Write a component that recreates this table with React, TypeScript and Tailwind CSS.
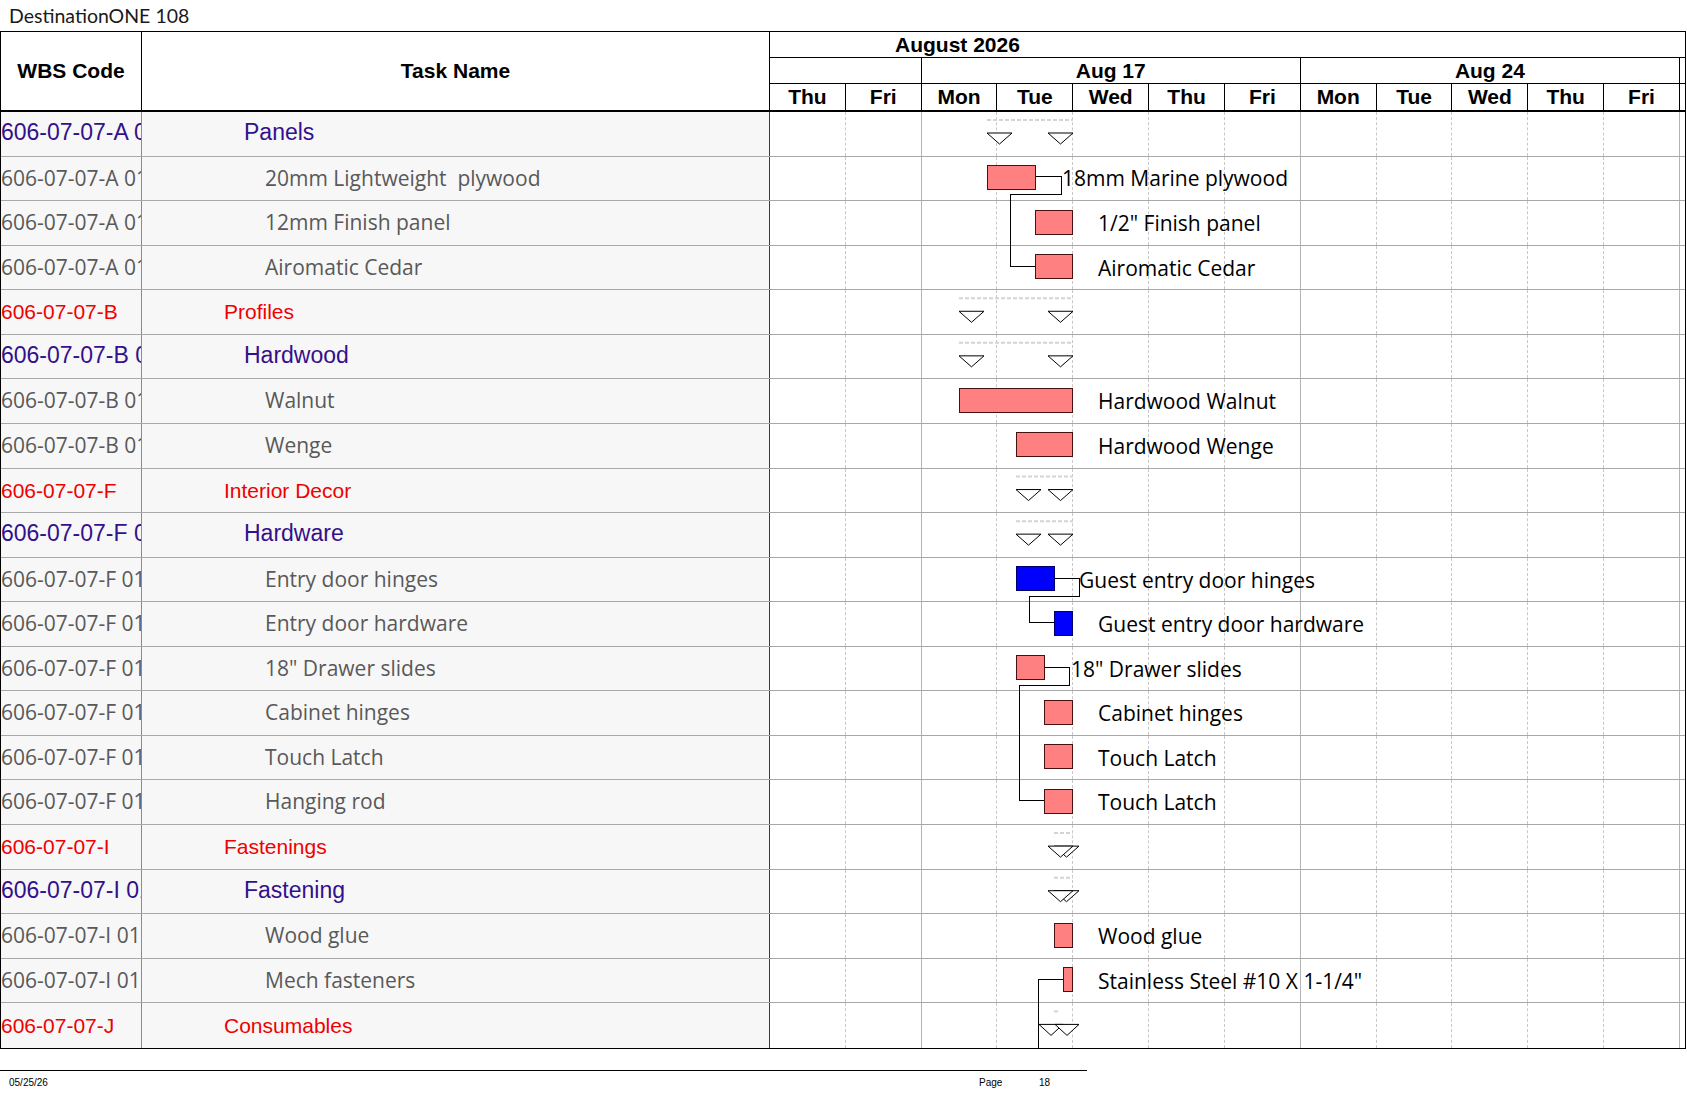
import React from "react";

type Row = { wbs: string; name: string; lvl: 1 | 2 | 3 };

const rows: Row[] = [
  { wbs: "606-07-07-A 01", name: "Panels", lvl: 2 },
  { wbs: "606-07-07-A 0101", name: "20mm Lightweight  plywood", lvl: 3 },
  { wbs: "606-07-07-A 0102", name: "12mm Finish panel", lvl: 3 },
  { wbs: "606-07-07-A 0103", name: "Airomatic Cedar", lvl: 3 },
  { wbs: "606-07-07-B", name: "Profiles", lvl: 1 },
  { wbs: "606-07-07-B 01", name: "Hardwood", lvl: 2 },
  { wbs: "606-07-07-B 0101", name: "Walnut", lvl: 3 },
  { wbs: "606-07-07-B 0102", name: "Wenge", lvl: 3 },
  { wbs: "606-07-07-F", name: "Interior Decor", lvl: 1 },
  { wbs: "606-07-07-F 01", name: "Hardware", lvl: 2 },
  { wbs: "606-07-07-F 0101", name: "Entry door hinges", lvl: 3 },
  { wbs: "606-07-07-F 0102", name: "Entry door hardware", lvl: 3 },
  { wbs: "606-07-07-F 0103", name: '18" Drawer slides', lvl: 3 },
  { wbs: "606-07-07-F 0104", name: "Cabinet hinges", lvl: 3 },
  { wbs: "606-07-07-F 0105", name: "Touch Latch", lvl: 3 },
  { wbs: "606-07-07-F 0106", name: "Hanging rod", lvl: 3 },
  { wbs: "606-07-07-I", name: "Fastenings", lvl: 1 },
  { wbs: "606-07-07-I 01", name: "Fastening", lvl: 2 },
  { wbs: "606-07-07-I 0101", name: "Wood glue", lvl: 3 },
  { wbs: "606-07-07-I 0102", name: "Mech fasteners", lvl: 3 },
  { wbs: "606-07-07-J", name: "Consumables", lvl: 1 },
];

const lvlText = {
  1: "font-['Liberation_Sans',Arial,sans-serif] text-[21px] text-[#f00000]",
  2: "font-['Liberation_Sans',Arial,sans-serif] text-[23px] text-[#33108c] pb-[3px]",
  3: "font-['Open_Sans',sans-serif] text-[21px] text-[#595959]",
};

const lvlPad = {
  1: "pl-[82px]",
  2: "pl-[102px]",
  3: "pl-[123px]",
};

const days = ["Thu", "Fri", "Mon", "Tue", "Wed", "Thu", "Fri", "Mon", "Tue", "Wed", "Thu", "Fri"];
const weekEnd = [1, 6, 11];

// gantt geometry, page px -> overlay px
const GX = 770;
const ROW_H = 44.57;
const cy = (r: number) => 20.4 + r * ROW_H;
const gx = (x: number) => x - GX;

const bars: { r: number; x1: number; x2: number; blue?: boolean }[] = [
  { r: 1, x1: 987, x2: 1035 },
  { r: 2, x1: 1035, x2: 1072 },
  { r: 3, x1: 1035, x2: 1072 },
  { r: 6, x1: 959, x2: 1072 },
  { r: 7, x1: 1016, x2: 1072 },
  { r: 10, x1: 1016, x2: 1054, blue: true },
  { r: 11, x1: 1054, x2: 1072, blue: true },
  { r: 12, x1: 1016, x2: 1044 },
  { r: 13, x1: 1044, x2: 1072 },
  { r: 14, x1: 1044, x2: 1072 },
  { r: 15, x1: 1044, x2: 1072 },
  { r: 18, x1: 1054, x2: 1072 },
  { r: 19, x1: 1063, x2: 1072 },
];

const summaries: { r: number; tris: [number, number][]; dash: [number, number] }[] = [
  { r: 0, tris: [[987, 1012], [1048, 1073]], dash: [987, 1073] },
  { r: 4, tris: [[959, 984], [1048, 1073]], dash: [959, 1073] },
  { r: 5, tris: [[959, 984], [1048, 1073]], dash: [959, 1073] },
  { r: 8, tris: [[1016, 1041], [1048, 1073]], dash: [1016, 1073] },
  { r: 9, tris: [[1016, 1041], [1048, 1073]], dash: [1016, 1073] },
  { r: 16, tris: [[1054, 1079], [1048, 1073]], dash: [1054, 1073] },
  { r: 17, tris: [[1054, 1079], [1048, 1073]], dash: [1054, 1073] },
  { r: 20, tris: [[1039, 1063], [1055, 1079]], dash: [1054, 1060] },
];

const labels: { r: number; x: number; text: string }[] = [
  { r: 1, x: 1062, text: "18mm Marine plywood" },
  { r: 2, x: 1098, text: '1/2" Finish panel' },
  { r: 3, x: 1098, text: "Airomatic Cedar" },
  { r: 6, x: 1098, text: "Hardwood Walnut" },
  { r: 7, x: 1098, text: "Hardwood Wenge" },
  { r: 10, x: 1079, text: "Guest entry door hinges" },
  { r: 11, x: 1098, text: "Guest entry door hardware" },
  { r: 12, x: 1071, text: '18" Drawer slides' },
  { r: 13, x: 1098, text: "Cabinet hinges" },
  { r: 14, x: 1098, text: "Touch Latch" },
  { r: 15, x: 1098, text: "Touch Latch" },
  { r: 18, x: 1098, text: "Wood glue" },
  { r: 19, x: 1098, text: 'Stainless Steel #10 X 1-1/4"' },
];

const links: string[] = [
  // panels
  `${gx(1035)},${cy(1)} ${gx(1061)},${cy(1)} ${gx(1061)},${cy(1) + 18} ${gx(1010)},${cy(1) + 18} ${gx(1010)},${cy(3)} ${gx(1035)},${cy(3)}`,
  // hinges
  `${gx(1054)},${cy(10)} ${gx(1079)},${cy(10)} ${gx(1079)},${cy(10) + 18} ${gx(1029)},${cy(10) + 18} ${gx(1029)},${cy(11)} ${gx(1054)},${cy(11)}`,
  // drawer slides
  `${gx(1044)},${cy(12)} ${gx(1069)},${cy(12)} ${gx(1069)},${cy(12) + 18} ${gx(1019)},${cy(12) + 18} ${gx(1019)},${cy(15)} ${gx(1044)},${cy(15)}`,
  // fasteners
  `${gx(1063)},${cy(19)} ${gx(1038)},${cy(19)} ${gx(1038)},${21 * ROW_H}`,
];

function DayCells() {
  return (
    <div className="flex flex-1 h-full">
      {days.map((d, i) => (
        <div
          key={i}
          className={
            weekEnd.includes(i)
              ? "w-[75.833px] shrink-0 h-full border-r border-solid border-[#b4b4b4]"
              : "w-[75.833px] shrink-0 h-full border-r border-dashed border-[#c8c8c8]"
          }
        />
      ))}
      <div className="flex-1" />
    </div>
  );
}

function GanttOverlay() {
  return (
    <div className="absolute left-[769px] top-0 w-[915px] h-full pointer-events-none">
      <svg width="915" height="936" className="absolute left-0 top-0">
        {summaries.map((s) => {
          const t = s.r * ROW_H + 21;
          return (
            <g key={s.r}>
              <line
                x1={gx(s.dash[0])}
                x2={gx(s.dash[1])}
                y1={s.r * ROW_H + 8}
                y2={s.r * ROW_H + 8}
                stroke="#d4d4d4"
                strokeWidth="2"
                strokeDasharray="4 2"
              />
              {s.tris.map(([a, b], i) => (
                <polygon
                  key={i}
                  points={`${gx(a)},${t} ${gx(b)},${t} ${(gx(a) + gx(b)) / 2},${t + 11}`}
                  fill="white"
                  stroke="black"
                  strokeWidth="1"
                />
              ))}
            </g>
          );
        })}
        {links.map((p, i) => (
          <polyline
            key={i}
            points={p}
            fill="none"
            stroke="black"
            strokeWidth="1"
            shapeRendering="crispEdges"
          />
        ))}
        {bars.map((b, i) => (
          <rect
            key={i}
            x={gx(b.x1) + 0.5}
            y={Math.round(cy(b.r) - 12) + 0.5}
            width={b.x2 - b.x1}
            height="24"
            fill={b.blue ? "#0000ff" : "#ff8080"}
            stroke={b.blue ? "#00006a" : "#4a1010"}
            strokeWidth="1"
            shapeRendering="crispEdges"
          />
        ))}
      </svg>
      {labels.map((l, i) => (
        <div
          key={i}
          className="absolute h-[30px] leading-[30px] whitespace-pre font-['Open_Sans',sans-serif] text-[21px] text-black"
          style={{ left: gx(l.x), top: cy(l.r) - 13.5 }}
        >
          {l.text}
        </div>
      ))}
    </div>
  );
}

export default function App() {
  const hb = "font-['Liberation_Sans',Arial,sans-serif] font-bold text-[21px] text-black";
  return (
    <div className="w-[1687px] h-[1097px] bg-white overflow-hidden">
      <div className="h-[31px] pl-[9px] flex items-center font-['Lato',sans-serif] text-[19.5px] text-[#1a1a1a]">
        DestinationONE 108
      </div>

      <div className="w-[1686px] border border-black">
        {/* header */}
        <div className="flex h-[80px] border-b-2 border-black">
          <div className={`w-[141px] shrink-0 border-r border-black flex items-center justify-center ${hb}`}>
            WBS Code
          </div>
          <div className={`w-[628px] shrink-0 border-r border-black flex items-center justify-center ${hb}`}>
            Task Name
          </div>
          <div className="flex-1 flex flex-col">
            <div className={`h-[26px] border-b border-black flex items-center pl-[125px] ${hb}`}>
              August 2026
            </div>
            <div className={`h-[26px] border-b border-black flex ${hb}`}>
              <div className="w-[151.67px] shrink-0 border-r border-black" />
              <div className="w-[379.17px] shrink-0 border-r border-black flex items-center justify-center">
                Aug 17
              </div>
              <div className="w-[379.17px] shrink-0 border-r border-black flex items-center justify-center">
                Aug 24
              </div>
              <div className="flex-1" />
            </div>
            <div className={`h-[26px] flex ${hb}`}>
              {days.map((d, i) => (
                <div
                  key={i}
                  className="w-[75.833px] shrink-0 border-r border-black flex items-center justify-center"
                >
                  {d}
                </div>
              ))}
              <div className="flex-1" />
            </div>
          </div>
        </div>

        {/* body */}
        <div className="relative">
          {rows.map((row, r) => (
            <div
              key={r}
              className={
                r < rows.length - 1
                  ? "flex h-[44.57px] border-b border-[#a8a8a8]"
                  : "flex h-[44.57px]"
              }
            >
              <div
                className={`w-[141px] shrink-0 bg-[#f7f7f7] border-r border-[#8c8c8c] overflow-hidden whitespace-nowrap flex items-center ${lvlText[row.lvl]}`}
              >
                {row.wbs}
              </div>
              <div
                className={`w-[628px] shrink-0 bg-[#f7f7f7] border-r border-[#3c3c3c] overflow-hidden whitespace-pre flex items-center ${lvlPad[row.lvl]} ${lvlText[row.lvl]}`}
              >
                {row.name}
              </div>
              <DayCells />
            </div>
          ))}
          <GanttOverlay />
        </div>
      </div>

      {/* footer */}
      <div className="mt-[21px] w-[1087px] border-t border-black" />
      <div className="flex h-[24px] items-center font-['Liberation_Sans',Arial,sans-serif] text-[10px] text-black">
        <span className="w-[979px] pl-[9px]">05/25/26</span>
        <span className="w-[60px]">Page</span>
        <span>18</span>
      </div>
    </div>
  );
}
